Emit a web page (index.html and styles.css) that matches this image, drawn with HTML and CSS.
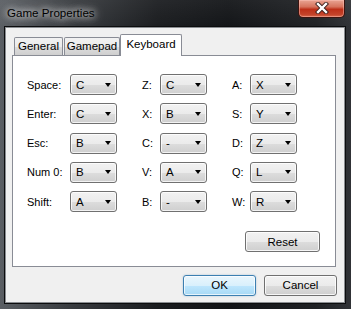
FILE: index.html
```html
<!DOCTYPE html>
<html>
<head>
<meta charset="utf-8">
<link rel="stylesheet" href="styles.css">
</head>
<body>
<div class="window">
  <div class="titlebar">
    <span class="title">Game Properties</span>
    <div class="close">
      <svg width="18" height="12" viewBox="0 0 18 12">
        <path d="M5 2 L13 10 M13 2 L5 10" stroke="#3a1f1c" stroke-width="4.2" stroke-linecap="square"/>
        <path d="M5 2 L13 10 M13 2 L5 10" stroke="#ffffff" stroke-width="2.4" stroke-linecap="square"/>
      </svg>
    </div>
  </div>
  <div class="client">
    <div class="tabs">
      <div class="tab t-general">General</div>
      <div class="tab t-gamepad">Gamepad</div>
      <div class="tab active t-keyboard">Keyboard</div>
    </div>
    <div class="panel">
      <div class="grid">
        <span class="lbl">Space:</span><div class="combo"><span>C</span><i></i></div>
        <span class="lbl lbl2">Z:</span><div class="combo"><span>C</span><i></i></div>
        <span class="lbl lbl2">A:</span><div class="combo"><span>X</span><i></i></div>

        <span class="lbl">Enter:</span><div class="combo"><span>C</span><i></i></div>
        <span class="lbl lbl2">X:</span><div class="combo"><span>B</span><i></i></div>
        <span class="lbl lbl2">S:</span><div class="combo"><span>Y</span><i></i></div>

        <span class="lbl">Esc:</span><div class="combo"><span>B</span><i></i></div>
        <span class="lbl lbl2">C:</span><div class="combo"><span>-</span><i></i></div>
        <span class="lbl lbl2">D:</span><div class="combo"><span>Z</span><i></i></div>

        <span class="lbl">Num 0:</span><div class="combo"><span>B</span><i></i></div>
        <span class="lbl lbl2">V:</span><div class="combo"><span>A</span><i></i></div>
        <span class="lbl lbl2">Q:</span><div class="combo"><span>L</span><i></i></div>

        <span class="lbl">Shift:</span><div class="combo"><span>A</span><i></i></div>
        <span class="lbl lbl2">B:</span><div class="combo"><span>-</span><i></i></div>
        <span class="lbl lbl2">W:</span><div class="combo"><span>R</span><i></i></div>
      </div>
      <div class="reset-row">
        <button class="btn reset">Reset</button>
      </div>
    </div>
    <div class="footer">
      <button class="btn default">OK</button>
      <button class="btn">Cancel</button>
    </div>
  </div>
</div>
</body>
</html>
```
FILE: styles.css
```css
* { box-sizing: border-box; }
html, body {
  margin: 0;
  padding: 0;
  width: 351px;
  height: 309px;
  overflow: hidden;
  font-family: "Liberation Sans", Arial, sans-serif;
  font-size: 11px;
}
.window {
  width: 351px;
  height: 309px;
  display: flex;
  flex-direction: column;
  background:
    linear-gradient(to bottom, rgba(255,255,255,0.06), rgba(0,0,0,0) 30px),
    linear-gradient(to right, #5a5e63 0%, #383b3f 20%, #1a1c1f 45%, #121417 65%, #1f2124 90%, #303236 100%);
}
.titlebar {
  height: 27px;
  display: flex;
  align-items: flex-start;
  padding-left: 7px;
  padding-right: 6px;
}
.title {
  margin-top: 6px;
  color: #000;
  font-family: "Liberation Sans", Arial, sans-serif;
  font-size: 11.6px;
  text-shadow: 0 0 6px rgba(255,255,255,0.9), 0 0 10px rgba(255,255,255,0.7), 0 0 14px rgba(255,255,255,0.5);
}
.close {
  margin-left: auto;
  width: 47px;
  height: 18px;
  border: 1px solid #3b1410;
  border-top: none;
  border-radius: 0 0 5px 5px;
  background: linear-gradient(to bottom, #e9a493 0%, #d6735d 40%, #bd2f18 55%, #c3432a 85%, #d8694c 100%);
  box-shadow: inset 0 0 0 1px rgba(255,200,190,0.45);
  display: flex;
  align-items: center;
  justify-content: center;
}
.close svg { display: block; margin-top: -1px; }
.client {
  margin: 0 6px 6px 5px;
  flex: 1;
  background: #f0f0f0;
  border: 1px solid #8a8d91;
  box-shadow: 0 0 0 1px #0c0d0e;
  display: flex;
  flex-direction: column;
  padding: 0 0 0 6px;
}
.tabs {
  display: flex;
  align-items: flex-end;
  height: 27px;
  padding-left: 2px;
  position: relative;
  z-index: 1;
}
.tab {
  height: 18px;
  margin-right: 1px;
  border: 1px solid #898c95;
  border-bottom: none;
  border-radius: 2px 2px 0 0;
  background: linear-gradient(to bottom, #f2f2f2 0%, #ebebeb 50%, #dddddd 51%, #cfcfcf 100%);
  color: #000;
  line-height: 16px;
  font-size: 11.5px;
  text-align: center;
}
.t-general { width: 49px; }
.t-gamepad { width: 56px; }
.tab.active {
  width: 62px;
  height: 22px;
  margin-left: -1px;
  margin-bottom: -1px;
  background: #fff;
  line-height: 18px;
}
.panel {
  width: 324px;
  height: 212px;
  background: #fff;
  border: 1px solid #898c95;
  display: flex;
  flex-direction: column;
  padding: 18px 15px 14px 14px;
}
.grid {
  display: grid;
  grid-template-columns: 43px 47px 43px 47px 43px 47px;
  grid-auto-rows: 21px;
  row-gap: 8.25px;
  align-items: center;
}
.lbl {
  color: #000;
  font-size: 11px;
}
.lbl2 { padding-left: 25px; }
.combo {
  height: 21px;
  border: 1px solid #707070;
  border-radius: 3px;
  background: linear-gradient(to bottom, #f2f2f2 0%, #ebebeb 50%, #dddddd 51%, #cfcfcf 100%);
  box-shadow: inset 0 0 0 1px rgba(255,255,255,0.75);
  display: flex;
  align-items: center;
  padding-left: 5px;
  padding-right: 4px;
  color: #000;
  font-size: 11.5px;
}
.combo span { flex: 1; }
.combo i {
  width: 0;
  height: 0;
  border-left: 3.5px solid transparent;
  border-right: 3.5px solid transparent;
  border-top: 4px solid #000;
  margin-right: 1px;
}
.reset-row {
  margin-top: auto;
  display: flex;
  justify-content: flex-end;
}
.btn {
  font-family: "Liberation Sans", Arial, sans-serif;
  font-size: 11.5px;
  color: #000;
  height: 21px;
  border: 1px solid #707070;
  border-radius: 3px;
  background: linear-gradient(to bottom, #f2f2f2 0%, #ebebeb 50%, #dddddd 51%, #cfcfcf 100%);
  box-shadow: inset 0 0 0 1px rgba(255,255,255,0.8);
  padding: 0;
  margin: 0;
}
.reset { width: 75px; }
.footer {
  flex: 1;
  display: flex;
  justify-content: flex-end;
  align-items: center;
  gap: 8px;
  padding-right: 7px;
  padding-top: 1px;
}
.footer .btn { width: 73px; }
.btn.default {
  border-color: #3c7fb1;
  background: linear-gradient(to bottom, #eaf6fd 0%, #d9f0fc 50%, #bee6fd 51%, #a7d9f5 100%);
  box-shadow: inset 0 0 0 1px rgba(255,255,255,0.7), 0 0 2px rgba(60,127,177,0.4);
}
```
